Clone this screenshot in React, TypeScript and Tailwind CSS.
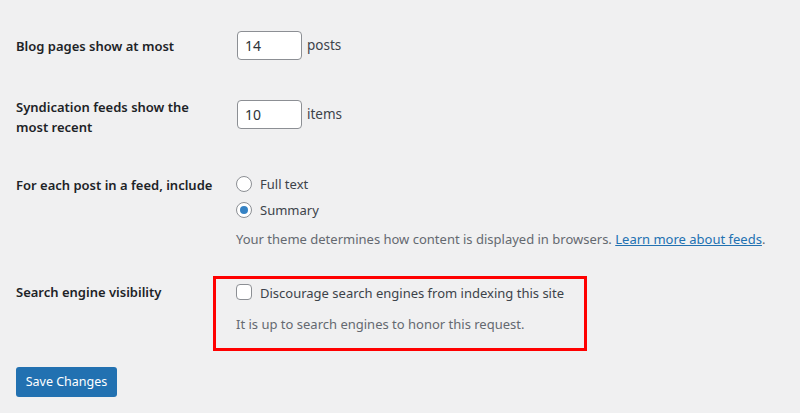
import React from "react";

const font = { fontFamily: '"Segoe UI", "Noto Sans", sans-serif' };

function Radio({ checked }: { checked?: boolean }) {
  return (
    <span className="flex h-4 w-4 shrink-0 items-center justify-center rounded-full border border-[#8c8f94] bg-white">
      {checked && <span className="h-2 w-2 rounded-full bg-[#3582c4]" />}
    </span>
  );
}

export default function App() {
  return (
    <div
      className="h-[413px] w-[800px] overflow-hidden bg-[#f0f0f1] px-4 text-[13px] text-[#3c434a]"
      style={font}
    >
      {/* Row 1 */}
      <div className="mt-[31px] flex items-center">
        <div className="w-[221px] shrink-0 font-semibold leading-5 text-[#1d2327]">Blog pages show at most</div>
        <div className="flex h-[29px] w-[65px] shrink-0 items-center rounded-[4px] border border-[#8c8f94] bg-white px-[7px] text-[14px] text-[#2c3338]">
          14
        </div>
        <span className="ml-[5px] text-[13.5px]">posts</span>
      </div>

      {/* Row 2 */}
      <div className="mt-[40px] flex items-start">
        <div className="mt-[-3px] w-[221px] shrink-0 font-semibold leading-5 text-[#1d2327]">
          Syndication feeds show the
          <br />
          most recent
        </div>
        <div className="flex items-center">
          <div className="flex h-[29px] w-[65px] shrink-0 items-center rounded-[4px] border border-[#8c8f94] bg-white px-[7px] text-[14px] text-[#2c3338]">
            10
          </div>
          <span className="ml-[5px] text-[13.5px]">items</span>
        </div>
      </div>

      {/* Row 3 */}
      <div className="mt-[37px] flex items-start">
        <div className="w-[220px] shrink-0 pt-[1px] font-semibold leading-5 text-[#1d2327]">For each post in a feed, include</div>
        <div className="flex flex-col">
          <label className="flex h-5 items-center gap-2">
            <Radio />
            <span className="leading-5">Full text</span>
          </label>
          <label className="mt-[6px] flex h-5 items-center gap-2">
            <Radio checked />
            <span className="leading-5">Summary</span>
          </label>
          <p className="mt-[9px] whitespace-nowrap leading-5 text-[#646970]">
            Your theme determines how content is displayed in browsers.{" "}
            <a className="text-[#2271b1] underline">Learn more about feeds</a>.
          </p>
        </div>
      </div>

      {/* Row 4 */}
      <div className="mt-[27px] flex items-start">
        <div className="mt-[6px] w-[197px] shrink-0 font-semibold leading-5 text-[#1d2327]">Search engine visibility</div>
        <div className="h-[75px] w-[374px] shrink-0 border-[3px] border-[#ff0000] pl-5 pt-[5px]">
          <label className="flex h-4 items-center gap-2">
            <span className="h-4 w-4 shrink-0 rounded-[4px] border border-[#8c8f94] bg-white" />
            <span className="mt-[2px] whitespace-nowrap leading-5">Discourage search engines from indexing this site</span>
          </label>
          <p className="mt-[14px] whitespace-nowrap leading-5 text-[#646970]">It is up to search engines to honor this request.</p>
        </div>
      </div>

      {/* Button */}
      <button className="mt-[16px] flex h-[30px] w-[101px] items-center justify-center rounded-[3px] bg-[#2271b1] text-[12.5px] text-white">
        Save Changes
      </button>
    </div>
  );
}
